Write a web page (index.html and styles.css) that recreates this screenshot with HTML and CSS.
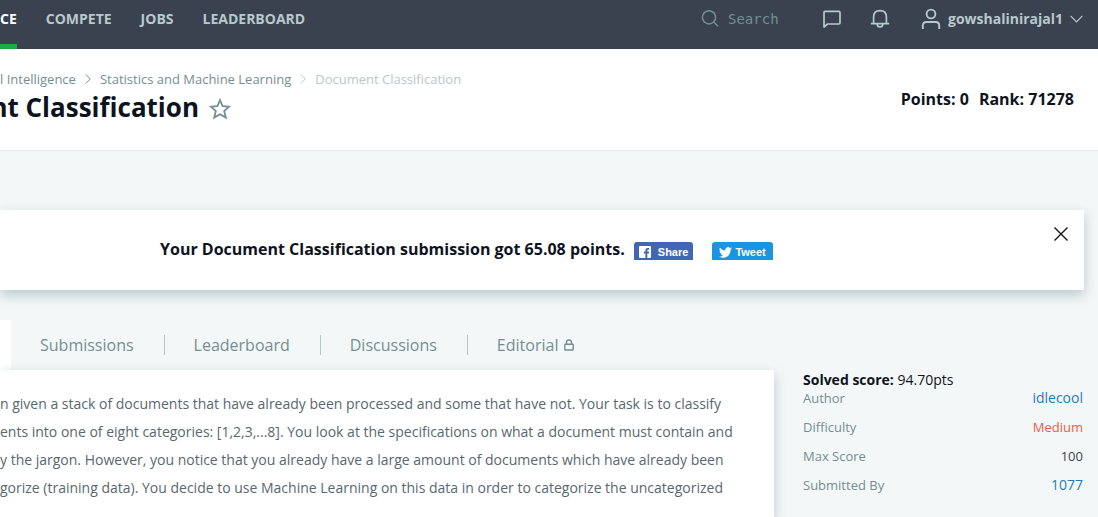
FILE: index.html
```
<!DOCTYPE html>
<html lang="en">
<head>
<meta charset="utf-8">
<title>Document Classification</title>
<link rel="stylesheet" href="styles.css">
</head>
<body>
<header class="topbar">
  <nav class="nav">
    <a class="nav-link active" href="#">CE</a>
    <a class="nav-link" href="#">COMPETE</a>
    <a class="nav-link" href="#">JOBS</a>
    <a class="nav-link" href="#">LEADERBOARD</a>
  </nav>
  <div class="tools">
    <label class="search">
      <svg width="18" height="18" viewBox="0 0 18 18" fill="none" stroke="currentColor" stroke-width="1.5"><circle cx="8" cy="7.300" r="6.600"/><path d="M12.700 12L17 16.300"/></svg>
      <input class="search-input" type="text" placeholder="Search" aria-label="Search">
    </label>
    <button class="icon-btn" aria-label="Messages"><svg width="20" height="20" viewBox="0 0 20 20" fill="none" stroke="currentColor" stroke-width="1.7" stroke-linejoin="round"><path d="M2 18V3.500Q2 2.300 3.200 2.300H16.800Q18 2.300 18 3.500V13.700Q18 15 16.800 15H5.500Z"/></svg></button>
    <button class="icon-btn" aria-label="Notifications"><svg width="20" height="20" viewBox="0 0 20 20" fill="none" stroke="currentColor" stroke-width="1.7"><path d="M.8 14.700H19.200M3.600 14.700V8C3.600 4 6.200 1.700 10 1.700S16.400 4 16.400 8V14.700M7.200 15C7.200 19 12.800 19 12.800 15"/></svg></button>
    <button class="user">
      <svg width="20" height="22" viewBox="0 0 20 22" fill="none" stroke="currentColor" stroke-width="1.9"><circle cx="10" cy="6" r="4.400"/><path d="M1.800 21V17.500Q1.800 14 5.500 14H14.500Q18.200 14 18.200 17.500V21"/></svg>
      <span>gowshalinirajal1</span>
      <svg width="13" height="8" viewBox="0 0 13 8" fill="none" stroke="currentColor" stroke-width="1.2"><path d="M.6 .8L6.500 6.800L12.400 .8"/></svg>
    </button>
  </div>
</header>

<section class="page-head">
  <div>
    <nav class="crumbs" aria-label="Breadcrumb">
      <a href="#">l Intelligence</a>
      <svg width="6" height="10" viewBox="0 0 6 10" fill="none" stroke="currentColor"><path d="M.8 .5L5.300 5L.8 9.500"/></svg>
      <a href="#">Statistics and Machine Learning</a>
      <span class="current"><svg width="6" height="10" viewBox="0 0 6 10" fill="none" stroke="currentColor"><path d="M.8 .5L5.300 5L.8 9.500"/></svg>Document Classification</span>
    </nav>
    <div class="title-row">
      <h1 class="title"><span>nt Classification</span></h1>
      <button class="star" aria-label="Bookmark"><svg width="22" height="22" viewBox="0 0 22 22" fill="none" stroke="currentColor" stroke-width="1.8"><path d="M11 2.200L13.600 8.200L20 8.700L15.200 13L16.800 19.600L11 16.200L5.200 19.600L6.800 13L2 8.700L8.400 8.200Z"/></svg></button>
    </div>
  </div>
  <div class="stats"><span>Points: 0</span><span>Rank: 71278</span></div>
</section>

<main class="content">
  <section class="notice">
    <p class="notice-text">Your Document Classification submission got 65.08 points.</p>
    <button class="share facebook"><svg width="12" height="12" viewBox="0 0 12 12"><path fill="#fff" fill-rule="evenodd" d="M1 0H11Q12 0 12 1V11Q12 12 11 12H8.300V7.400H9.900L10.100 5.600H8.300V4.500Q8.300 3.700 9.100 3.700H10.200V2.100H8.700Q6.400 2.100 6.400 4.300V5.600H4.900V7.400H6.400V12H1Q0 12 0 11V1Q0 0 1 0Z"/></svg>Share</button>
    <button class="share twitter"><svg width="13" height="11" viewBox="0 0 24 20"><path fill="#fff" d="M24 2.400a10 10 0 0 1-2.800.8A5 5 0 0 0 23.300.5a10 10 0 0 1-3.100 1.200 4.900 4.900 0 0 0-8.400 4.500A14 14 0 0 1 1.700 1a4.900 4.900 0 0 0 1.500 6.600A5 5 0 0 1 1 7v.1a4.900 4.900 0 0 0 3.900 4.800 5 5 0 0 1-2.200.1 4.900 4.900 0 0 0 4.600 3.400A10 10 0 0 1 0 17.500 14 14 0 0 0 21.500 5a10 10 0 0 0 2.500-2.600z"/></svg>Tweet</button>
    <button class="close" aria-label="Close"><svg width="14" height="14" viewBox="0 0 14 14" fill="none" stroke="currentColor" stroke-width="1.4"><path d="M.5 .5L13.500 13.500M13.500 .5L.5 13.500"/></svg></button>
  </section>

  <div class="columns">
    <div class="main-col">
      <nav class="tabs">
        <span class="tab-active"></span>
        <a class="tab" href="#">Submissions</a>
        <a class="tab" href="#">Leaderboard</a>
        <a class="tab" href="#">Discussions</a>
        <a class="tab" href="#">Editorial <svg width="10" height="12" viewBox="0 0 10 12" fill="none" stroke="currentColor" stroke-width="1.4"><rect x=".8" y="5.200" width="8.400" height="5.800" rx=".6"/><path d="M2.500 5V3.300Q2.500 1 5 1T7.500 3.300V5"/></svg></a>
      </nav>
      <article class="problem">
        <p>n given a stack of documents that have already been processed and some that have not. Your task is to classify<br>ents into one of eight categories: [1,2,3,...8]. You look at the specifications on what a document must contain and<br>y the jargon. However, you notice that you already have a large amount of documents which have already been<br>gorize (training data). You decide to use Machine Learning on this data in order to categorize the uncategorized</p>
      </article>
    </div>
    <aside class="side">
      <p class="solved"><strong>Solved score:</strong> 94.70pts</p>
      <dl class="facts">
        <div class="fact"><dt>Author</dt><dd><a href="#">idlecool</a></dd></div>
        <div class="fact"><dt>Difficulty</dt><dd class="medium">Medium</dd></div>
        <div class="fact"><dt>Max Score</dt><dd class="score">100</dd></div>
        <div class="fact"><dt>Submitted By</dt><dd><a href="#">1077</a></dd></div>
      </dl>
    </aside>
  </div>
</main>
</body>
</html>
```
FILE: styles.css
```
* { box-sizing: border-box; }
body {
  margin: 0;
  min-height: 100vh;
  display: flex;
  flex-direction: column;
  background: #f3f7f7;
  color: #0e141e;
  font: 14px/20px "Open Sans", "Noto Sans", sans-serif;
}
a { color: inherit; text-decoration: none; }
p, h1, dl, dd { margin: 0; }
svg { display: block; flex: none; }
button {
  display: flex;
  align-items: center;
  padding: 0;
  border: 0;
  background: none;
  color: inherit;
  font: inherit;
}

.topbar {
  display: flex;
  justify-content: space-between;
  height: 49px;
  padding-right: 15px;
  background: #39424e;
  color: #b7c9cc;
}
.nav { display: flex; gap: 29px; font-weight: 700; }
.nav-link { padding-top: 9px; }
.active { color: #fff; border-bottom: 5px solid #1ba94c; }
.tools { display: flex; align-items: center; height: 38px; }
.search { display: flex; align-items: center; gap: 9px; margin-right: 34px; color: #738f93; }
.search-input {
  width: 60px;
  padding: 0;
  border: 0;
  background: none;
  color: inherit;
  font: 14px/20px "DejaVu Sans Mono", monospace;
}
.search-input::placeholder { color: #738f93; opacity: 1; }
.icon-btn { margin-right: 28px; }
.user { gap: 7px; margin-left: 3px; font-weight: 700; }

.page-head {
  display: flex;
  justify-content: space-between;
  height: 102px;
  padding: 20px 24px 0 0;
  background: #fff;
  border-bottom: 1px solid #e7eeef;
}
.crumbs { display: flex; align-items: center; gap: 9px; font-size: 13px; color: #738f93; white-space: nowrap; }
.current { display: flex; align-items: center; gap: 9px; color: #b7c9cc; }
.title-row { display: flex; align-items: center; gap: 10px; }
.title { display: flex; justify-content: flex-end; width: 199px; overflow: hidden; font-size: 26px; line-height: 36px; font-weight: 700; white-space: nowrap; }
.star { color: #738f93; padding-top: 4px; }
.stats { display: flex; gap: 10px; padding-top: 20px; font-size: 16px; font-weight: 700; }

.content { display: flex; flex-direction: column; flex: 1; padding-top: 59px; }
.notice {
  display: flex;
  align-items: center;
  height: 80px;
  margin-right: 14px;
  padding: 0 16px 0 160px;
  background: #fff;
  box-shadow: 0 5px 12px #b7c9cc;
}
.notice-text { margin-right: 9px; padding-bottom: 2px; font-size: 16px; font-weight: 700; }
.share {
  height: 18px;
  margin: 2px 19px 0 0;
  padding: 2px 5px 0;
  border-radius: 3px 3px 0 0;
  color: #fff;
  font: 700 11px/16px "Liberation Sans", sans-serif;
}
.facebook { gap: 7px; background: #4267b2; }
.twitter { gap: 3px; padding: 2px 7px 0; background: #1b95e0; }
.close { margin: 0 0 32px auto; }

.columns { display: flex; flex: 1; padding: 30px 14px 0 0; gap: 29px; }
.main-col { display: flex; flex-direction: column; flex: 1; }
.tabs { display: flex; align-items: center; height: 50px; font-size: 16px; color: #738f93; }
.tab-active { width: 11px; height: 50px; background: #fff; }
.tab { display: flex; align-items: center; gap: 6px; padding: 0 30px 0 29px; border-right: 1px solid #b7c9cc; }
.tab:last-child { border-right: 0; }
.problem {
  flex: 1;
  padding: 20px 20px 0 0;
  background: #fff;
  box-shadow: 0 5px 12px #b7c9cc;
  color: #576871;
  line-height: 28px;
  white-space: nowrap;
}
.side { width: 281px; padding: 50px 1px 0 0; }
.solved { margin-bottom: -2px; }
.fact { display: flex; justify-content: space-between; height: 29px; color: #39424e; }
.fact dt { color: #738f93; font-size: 13px; }
.fact a { color: #1f7cbf; }
.fact .medium { color: #f2594b; font-size: 13px; }
.fact .score { font-size: 13px; }
```
